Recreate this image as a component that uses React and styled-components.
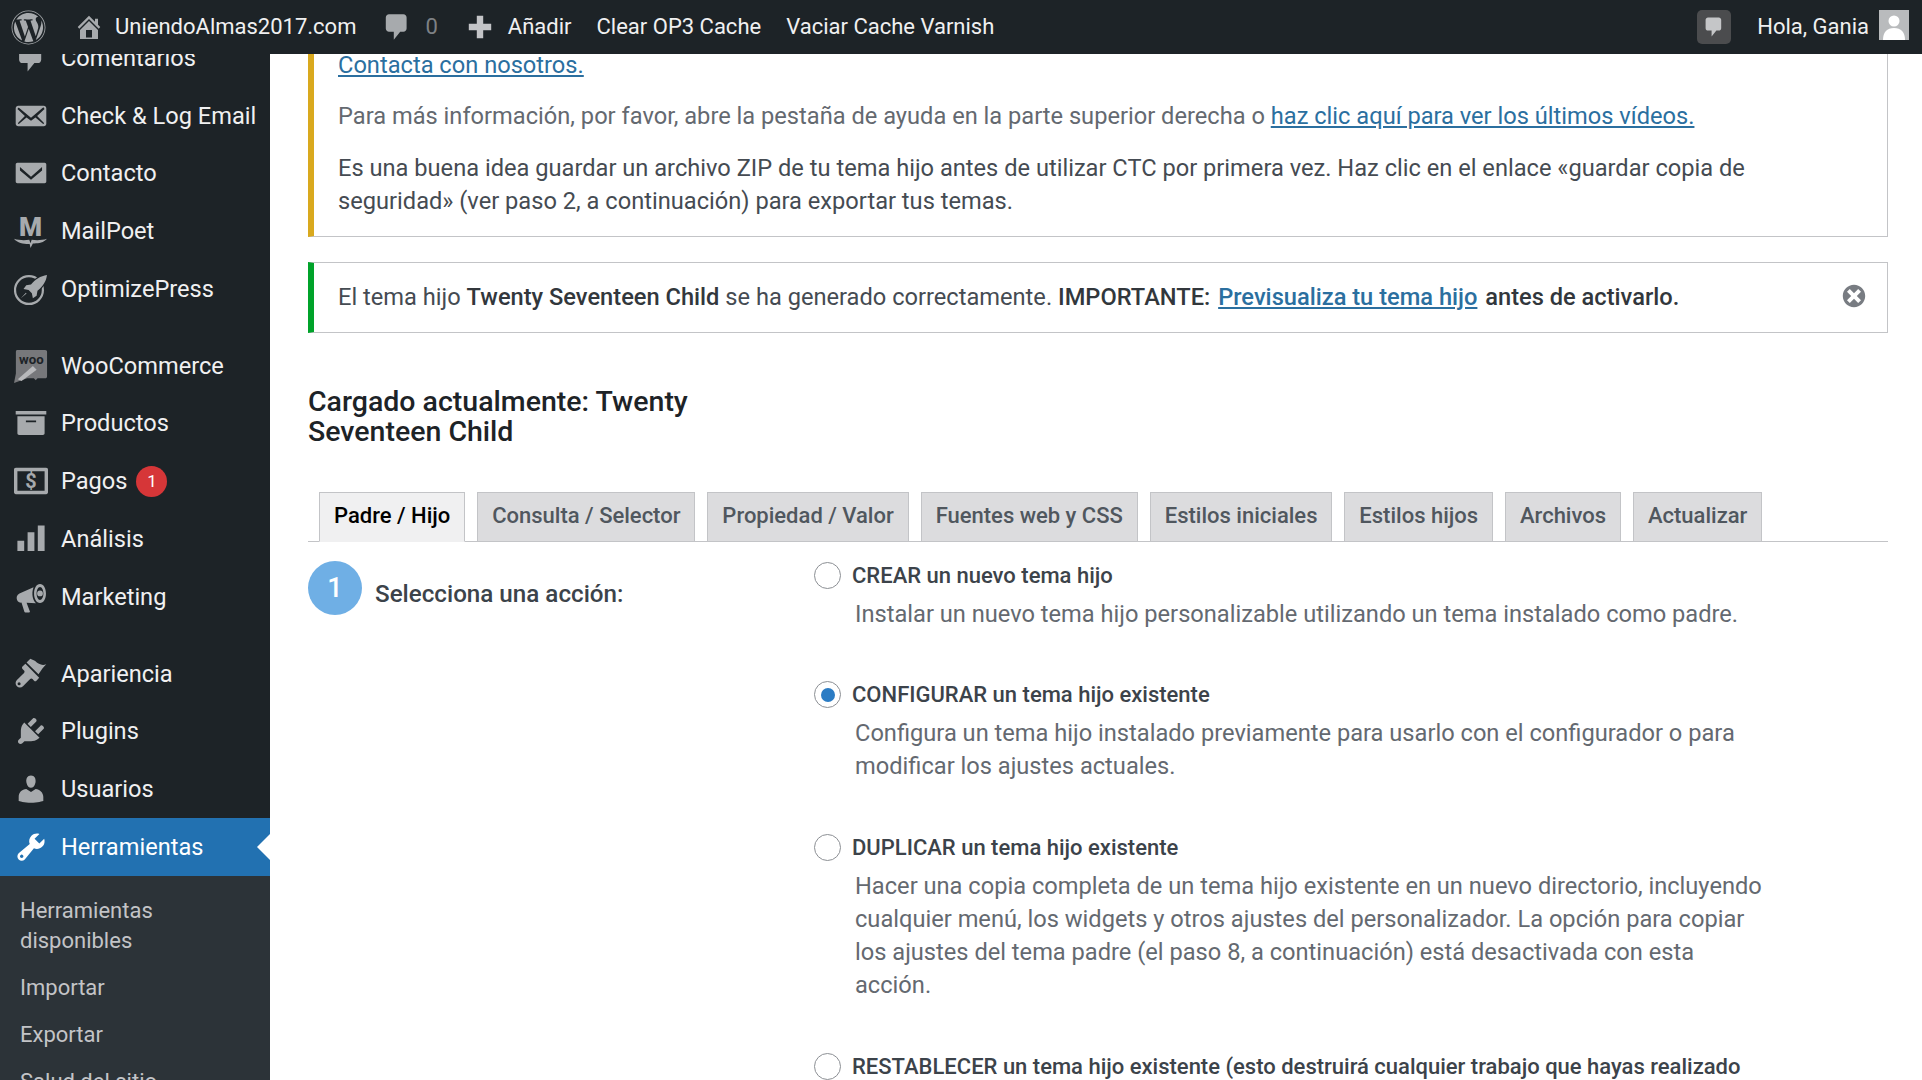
import React from "react";
import styled, { createGlobalStyle } from "styled-components";
import { FaWordpress } from "react-icons/fa";

const Global = createGlobalStyle`
  html, body { margin: 0; padding: 0; background: #fff; }
  body { font-family: Roboto, "Liberation Sans", sans-serif; overflow: hidden; }
  * { box-sizing: border-box; }
`;

const Page = styled.div`
  width: 1922px; height: 1080px; display: flex; flex-direction: column; overflow: hidden; background: #fff;
`;
const Bar = styled.header`
  height: 54px; flex: none; background: #1d2327; color: #f0f0f1; display: flex; align-items: center;
  font-size: 22px; padding-left: 11px; padding-right: 13px;
`;
const BarItem = styled.span`
  display: inline-flex; align-items: center; margin-left: ${p => p.$ml || 0}px; margin-top: ${p => p.$text ? -2 : 0}px;
  color: ${p => p.$dim ? "#7d8185" : "#f0f0f1"}; white-space: nowrap;
`;
const BarSpacer = styled.div` flex: 1; `;
const WpLogo = styled(FaWordpress)` width: 35px; height: 35px; color: #a7aaad; display: block; `;
const Ico = styled.svg`
  width: ${p => p.$s || 34}px; height: ${p => p.$s || 34}px; flex: none; fill: ${p => p.$c || "#a7aaad"}; display: block;
`;
const ChatBox = styled.span`
  width: 34px; height: 34px; border-radius: 5px; background: #4b4c4e; display: inline-flex; align-items: center; justify-content: center;
`;
const Avatar = styled.span`
  width: 30px; height: 30px; margin-left: 10px; background: #b9bbbd; display: block; overflow: hidden; margin-top: -5px;
`;
const Main = styled.div` flex: 1; display: flex; min-height: 0; overflow: hidden; `;
const Side = styled.nav`
  width: 270px; flex: none; background: #1d2327; margin-top: -25px; color: #f0f0f1;
`;
const Row = styled.div`
  position: relative; height: 57.7px; display: flex; align-items: center; padding-left: 14px; gap: 13px; font-size: 23.6px;
  background: ${p => p.$active ? "#2271b1" : "transparent"}; color: ${p => p.$active ? "#fff" : "#f0f0f1"};
`;
const Notch = styled.span`
  position: absolute; right: 0; top: 50%; margin-top: -13px; width: 0; height: 0;
  border-top: 13px solid transparent; border-bottom: 13px solid transparent; border-right: 13px solid #fff;
`;
const Sep = styled.div` height: 19.5px; `;
const Badge = styled.span`
  width: 31px; height: 31px; border-radius: 50%; background: #d63638; color: #fff; display: inline-flex; align-items: center; justify-content: center;
  font-size: 17px; margin-left: -4px;
`;
const Sub = styled.div` background: #2c3338; padding: 20px 20px 0; color: #c3c4c7; font-size: 22px; line-height: 30.6px; min-height: 300px; `;
const SubItem = styled.div` margin-bottom: 16.4px; width: 200px; `;
const Content = styled.main`
  flex: 1; min-width: 0; padding: 0 34px 0 38px; font-size: 23.65px; line-height: 33px; color: #3c434a;
`;
const Notice = styled.section`
  background: #fff; border: 1px solid #c3c4c7; border-left: 6px solid ${p => p.$c};
  padding: ${p => p.$pad}; margin-top: ${p => p.$mt}px; position: relative; display: flex; align-items: center; justify-content: space-between;
`;
const NoticeBody = styled.div` flex: 1; `;
const DismissWrap = styled.span` display: block; margin-top: -3px; `;
const P = styled.p` margin: 0 0 ${p => p.$mb || 0}px; padding-top: ${p => p.$pt || 0}px; color: ${p => p.$c || "#454b52"}; `;
const A = styled.a`
  color: #2b6f9f; text-decoration: underline; font-weight: ${p => p.$bold ? 500 : 400}; margin: 0 ${p => p.$bold ? 2 : 0}px;
`;
const Strong = styled.strong` font-weight: 500; color: #32373c; `;
const Heading = styled.h2`
  font-size: 28.5px; line-height: 30.5px; font-weight: 500; color: #1d2327; margin: 53.5px 0 44px; width: 420px;
`;
const Tabs = styled.div`
  display: flex; gap: 11.9px; padding-left: 11px; height: 50px; border-bottom: 1px solid #c3c4c7;
`;
const Tab = styled.div`
  height: 50px; padding: 0 14px 2px; display: flex; align-items: center; font-size: 22px; font-weight: 500;
  border: 1px solid #c3c4c7; ${p => p.$active ? "border-bottom: 1px solid #f0f0f1;" : ""}
  background: ${p => p.$active ? "#f0f0f1" : "#dcdcde"}; color: ${p => p.$active ? "#000" : "#50575e"};
`;
const Grid = styled.div` display: grid; grid-template-columns: 506px 1fr; padding-top: 17px; `;
const Step = styled.div` display: flex; align-items: flex-start; gap: 13px; padding-top: 2.5px; `;
const Circle = styled.span`
  width: 54px; height: 54px; border-radius: 50%; background: #6fafe5; color: #fff; font-size: 27px; font-weight: 500;
  display: flex; align-items: center; justify-content: center; flex: none;
`;
const StepLabel = styled.span` font-size: 24.2px; font-weight: 500; color: #3c434a; margin-top: 16.5px; `;
const Option = styled.div` margin-bottom: 47.8px; `;
const OptLabel = styled.label` display: flex; align-items: center; gap: 11px; font-weight: 500; font-size: 22px; color: #3c434a; white-space: nowrap; `;
const Radio = styled.span`
  width: 27px; height: 27px; border-radius: 50%; border: 1.5px solid #8c8f94; background: #fff; flex: none; display: flex; align-items: center; justify-content: center;
`;
const Dot = styled.span` width: 14px; height: 14px; border-radius: 50%; background: #2b7cc4; `;
const Desc = styled.p` margin: 6px 0 0 41px; max-width: 915px; color: #646970; `;

const I = ({ d, s, c }) => <Ico viewBox="0 0 20 20" $s={s} $c={c}><path d={d} /></Ico>;
const P_ = {
  comment: "M5 2h9c1.1 0 2 .9 2 2v7c0 1.1-.9 2-2 2h-2l-4 5v-5H5c-1.1 0-2-.9-2-2V4c0-1.1.9-2 2-2z",
  home: "M16 8.5l1.53 1.53-1.06 1.06L10 4.62l-6.47 6.47-1.06-1.06L10 2.5l4 4v-2h2v4zm-6-2.46l6 5.99V18H4v-5.97zM12 17v-5H8v5h4z",
  plus: "M8 3h4v5h5v4h-5v5H8v-5H3V8h5z",
  emailAlt: "M19 14.5v-9c0-.83-.67-1.5-1.5-1.5H2.5C1.67 4 1 4.67 1 5.5v9c0 .83.67 1.5 1.5 1.5h15c.83 0 1.5-.67 1.5-1.5zm-1.31-9.11c.33.33.15.67-.03.84L13.6 9.95l3.9 4.06c.12.14.2.36.06.51-.13.16-.43.15-.56.05l-4.37-3.73-2.63 1.95-2.63-1.95-4.37 3.73c-.13.1-.43.11-.56-.05-.14-.15-.06-.37.06-.51l3.9-4.06-4.06-3.72c-.18-.17-.36-.51-.03-.84s.67-.17.95.07L10 11l6.74-5.68c.28-.24.62-.4.95-.07z",
  email: "M2 4h16c.55 0 1 .45 1 1v10c0 .55-.45 1-1 1H2c-.55 0-1-.45-1-1V5c0-.55.45-1 1-1zm8 8.2L3.5 6.4v2.2L10 14l6.5-5.4V6.4z",
  archive: "M1 3h18v2H1zM2 6h16v10c0 .55-.45 1-1 1H3c-.55 0-1-.45-1-1zm5 2.5v1h6v-1z",
  money: "M2 3h16c.6 0 1 .4 1 1v12c0 .6-.4 1-1 1H2c-.6 0-1-.4-1-1V4c0-.6.4-1 1-1zm.8 1.800v10.400h14.400V4.800z",
  chart: "M18 17V2h-4v15h4zm-6 0V6H8v11h4zm-6 0v-6H2v6h4z",
  mega: "M11.5 4.2 3.2 8c-1.5.7-2 2.2-1.4 3.7.5 1.1 1.5 1.7 2.6 1.6l1.7 5.4c.1.3.3.4.6.4h2.2c.4 0 .6-.4.4-.7L7.4 13.4l5.6.3c-1.8-1.4-3-5.6-1.5-9.5zM15.3 2.3c-2.1 0-3.5 2.5-3.5 5.6s1.4 5.6 3.5 5.6 3.5-2.5 3.5-5.6-1.4-5.6-3.5-5.6zm0 1.8c1.1 0 2 1.7 2 3.8s-.9 3.8-2 3.8-2-1.7-2-3.8.9-3.8 2-3.8zm0 2.1a1.7 1.7 0 100 3.4 1.7 1.7 0 000-3.4z",
  brush: "M19 4.2c-1.6.8-3 .5-4.3-.2-1.3-.8-1.6-1.3-2.8-2L9.6 1 7.4 3.2l7 7c1.6-2.6 2.8-4.3 4.6-6zM6.7 3.9 5 5.6c-.4.4-.4 1 0 1.4l.9 1c.4.4.4 1 0 1.4L1.7 13.6c-1 1-1 2.6 0 3.6s2.6 1 3.6 0l4.2-4.2c.4-.4 1-.4 1.4 0l.9.9c.4.4 1 .4 1.4 0l1.6-1.7zM3 16.6a.9.9 0 110-1.8.9.9 0 010 1.8z",
  plug: "M13.11 4.36L9.87 7.6 8 5.73l3.24-3.24c.35-.34 1.05-.2 1.56.32.52.51.66 1.21.31 1.55zm-8 1.77l.91-1.12 9.01 9.01-1.19.84c-.71.71-2.63 1.16-3.82 1.16H6.14L4.9 17.26c-.59.59-1.54.59-2.12 0-.59-.58-.59-1.53 0-2.12l1.24-1.24v-3.88c0-1.13.4-3.19 1.09-3.89zm7.26 3.97l3.24-3.24c.34-.35 1.04-.21 1.55.31.52.51.66 1.21.31 1.55l-3.24 3.25z",
  user: "M10 9.25c-2.27 0-2.73-3.44-2.73-3.44C7 4.02 7.82 2 9.97 2c2.16 0 2.98 2.02 2.71 3.81 0 0-.41 3.44-2.68 3.44zm0 2.57L12.72 10c2.39 0 4.52 2.33 4.52 4.53v2.49s-3.65 1.13-7.24 1.13c-3.65 0-7.24-1.13-7.24-1.13v-2.49c0-2.25 1.94-4.48 4.47-4.48z",
  tool: "M16.68 9.77c-1.34 1.34-3.3 1.67-4.95.99l-5.41 6.52c-.99.99-2.59.99-3.58 0s-.99-2.59 0-3.57l6.52-5.42c-.68-1.65-.35-3.61.99-4.95 1.28-1.28 3.12-1.62 4.72-1.06l-2.89 2.89 2.82 2.82 2.86-2.87c.53 1.58.18 3.39-1.08 4.65zM3.81 16.21c.4.39 1.04.39 1.43 0 .4-.4.4-1.04 0-1.43-.39-.4-1.03-.4-1.43 0-.39.39-.39 1.03 0 1.43z",
  dismiss: "M10 2c4.42 0 8 3.58 8 8s-3.58 8-8 8-8-3.58-8-8 3.58-8 8-8zm5 11l-3-3 3-3-2-2-3 3-3-3-2 2 3 3-3 3 2 2 3-3 3 3z",
  rocket: "M19.400 1.700c-3.800.6-7 2.500-9.400 5.600L7.200 7.800 5.600 10l3 .6 1.900 1.900.6 3 2.200-1.600.5-2.800c3-2.500 5.200-5.600 5.600-9.400zM7 12.200 4 15.500l3.400-2.800z",
};

const MoneyIcon = () => (
  <Ico viewBox="1 1 18 18">
    <path d={P_.money} fillRule="evenodd" />
    <text x="10" y="13.800" textAnchor="middle" fontSize="10.500" fontWeight="700" fontFamily="Roboto, sans-serif">$</text>
  </Ico>
);
const WooIcon = () => (
  <Ico viewBox="1 1 18 18">
    <path d="M2.500 1.500h15c.6 0 1 .4 1 1v13c0 .6-.4 1-1 1h-4l-1 1-1-1H8L1 19l1-5V2.500c0-.6.4-1 .5-1z" fill="#77787b" />
    <text x="10.200" y="8.800" textAnchor="middle" fontSize="7" fontWeight="700" fill="#1d2327" fontFamily="Roboto, sans-serif">woo</text>
    <path d="M3 17l8-7 2 2-8 6z" fill="#b8b9bb" />
  </Ico>
);
const PoetIcon = () => (
  <Ico viewBox="0 0 20 20">
    <text x="9.700" y="12.800" textAnchor="middle" fontSize="15.500" fontWeight="900" fontFamily="Roboto, sans-serif">M</text>
    <path d="M0 14.600c3 1 6.500 1 9 .6l.7 2 .7-2c2.500.4 6 .4 9-.6-2 2.500-5.500 2.800-8.300 2.700L9.700 20l-.5-2.300C6 17.800 2 17.200 0 14.600z" />
  </Ico>
);
const RocketIcon = () => (
  <Ico viewBox="0 0 20 20">
    <circle cx="8.800" cy="10.600" r="8.200" fill="none" stroke="#a7aaad" strokeWidth="1.300" />
    <path d={P_.rocket} stroke="#1d2327" strokeWidth="1.300" paintOrder="stroke" />
  </Ico>
);
const ProfileIcon = () => (
  <Ico viewBox="0 0 30 30" $s={30} $c="#fff">
    <circle cx="15" cy="11" r="5.500" />
    <path d="M4 30c0-8 4-12 11-12s11 4 11 12z" />
  </Ico>
);

const menu1 = [
  ["Comentarios", <I d={P_.comment} />], ["Check & Log Email", <I d={P_.emailAlt} />], ["Contacto", <I d={P_.email} />],
  ["MailPoet", <PoetIcon />], ["OptimizePress", <RocketIcon />],
];
const menu2 = [
  ["WooCommerce", <WooIcon />], ["Productos", <I d={P_.archive} />], ["Pagos", <MoneyIcon />, "1"], ["Análisis", <I d={P_.chart} />], ["Marketing", <I d={P_.mega} />],
];
const menu3 = [
  ["Apariencia", <I d={P_.brush} />], ["Plugins", <I d={P_.plug} />], ["Usuarios", <I d={P_.user} />],
];
const tabs = ["Padre / Hijo", "Consulta / Selector", "Propiedad / Valor", "Fuentes web y CSS", "Estilos iniciales", "Estilos hijos", "Archivos", "Actualizar"];

const renderRows = (list) => list.map(([t, ic, b]) => (
  <Row key={t}>{ic}<span>{t}</span>{b && <Badge>{b}</Badge>}</Row>
));

export default function App() {
  return (
    <Page>
      <Global />
      <Bar>
        <WpLogo />
        <BarItem $ml={28}><I d={P_.home} s={30} /></BarItem>
        <BarItem $ml={11} $text>UniendoAlmas2017.com</BarItem>
        <BarItem $ml={25}><I d={P_.comment} s={32} /></BarItem>
        <BarItem $ml={12} $dim $text>0</BarItem>
        <BarItem $ml={26}><I d={P_.plus} s={32} c="#c3c4c7" /></BarItem>
        <BarItem $ml={12} $text>Añadir</BarItem>
        <BarItem $ml={25} $text>Clear OP3 Cache</BarItem>
        <BarItem $ml={25} $text>Vaciar Cache Varnish</BarItem>
        <BarSpacer />
        <ChatBox><I d={P_.comment} s={24} c="#c5c6c8" /></ChatBox>
        <BarItem $ml={26} $text>Hola, Gania</BarItem>
        <Avatar><ProfileIcon /></Avatar>
      </Bar>
      <Main>
        <Side>
          {renderRows(menu1)}
          <Sep />
          {renderRows(menu2)}
          <Sep />
          {renderRows(menu3)}
          <Row $active><I d={P_.tool} c="#fff" /><span>Herramientas</span><Notch /></Row>
          <Sub>
            <SubItem>Herramientas disponibles</SubItem>
            <SubItem>Importar</SubItem>
            <SubItem>Exportar</SubItem>
            <SubItem>Salud del sitio</SubItem>
          </Sub>
        </Side>
        <Content>
          <Notice $c="#d9a91e" $pad="0 24px 18px 24px" $mt={-40}>
            <NoticeBody>
              <P $mb={18.500} $pt={33.500}><A href="#">Contacta con nosotros.</A></P>
              <P $mb={19} $c="#646970">Para más información, por favor, abre la pestaña de ayuda en la parte superior derecha o <A href="#">haz clic aquí para ver los últimos vídeos.</A></P>
              <P>Es una buena idea guardar un archivo ZIP de tu tema hijo antes de utilizar CTC por primera vez. Haz clic en el enlace «guardar copia de seguridad» (ver paso 2, a continuación) para exportar tus temas.</P>
            </NoticeBody>
          </Notice>
          <Notice $c="#00a32a" $pad="18px 19px 18px 24px" $mt={25}>
            <NoticeBody>
              <P>El tema hijo <Strong>Twenty Seventeen Child</Strong> se ha generado correctamente. <Strong>IMPORTANTE:</Strong> <A href="#" $bold>Previsualiza tu tema hijo</A> <Strong>antes de activarlo.</Strong></P>
            </NoticeBody>
            <DismissWrap><I d={P_.dismiss} s={28} c="#787c82" /></DismissWrap>
          </Notice>
          <Heading>Cargado actualmente: Twenty Seventeen Child</Heading>
          <Tabs>
            {tabs.map((t, i) => <Tab key={t} $active={i === 0}>{t}</Tab>)}
          </Tabs>
          <Grid>
            <Step><Circle>1</Circle><StepLabel>Selecciona una acción:</StepLabel></Step>
            <div>
              <Option>
                <OptLabel><Radio />CREAR un nuevo tema hijo</OptLabel>
                <Desc>Instalar un nuevo tema hijo personalizable utilizando un tema instalado como padre.</Desc>
              </Option>
              <Option>
                <OptLabel><Radio><Dot /></Radio>CONFIGURAR un tema hijo existente</OptLabel>
                <Desc>Configura un tema hijo instalado previamente para usarlo con el configurador o para modificar los ajustes actuales.</Desc>
              </Option>
              <Option>
                <OptLabel><Radio />DUPLICAR un tema hijo existente</OptLabel>
                <Desc>Hacer una copia completa de un tema hijo existente en un nuevo directorio, incluyendo cualquier menú, los widgets y otros ajustes del personalizador. La opción para copiar los ajustes del tema padre (el paso 8, a continuación) está desactivada con esta acción.</Desc>
              </Option>
              <Option>
                <OptLabel><Radio />RESTABLECER un tema hijo existente (esto destruirá cualquier trabajo que hayas realizado</OptLabel>
              </Option>
            </div>
          </Grid>
        </Content>
      </Main>
    </Page>
  );
}
